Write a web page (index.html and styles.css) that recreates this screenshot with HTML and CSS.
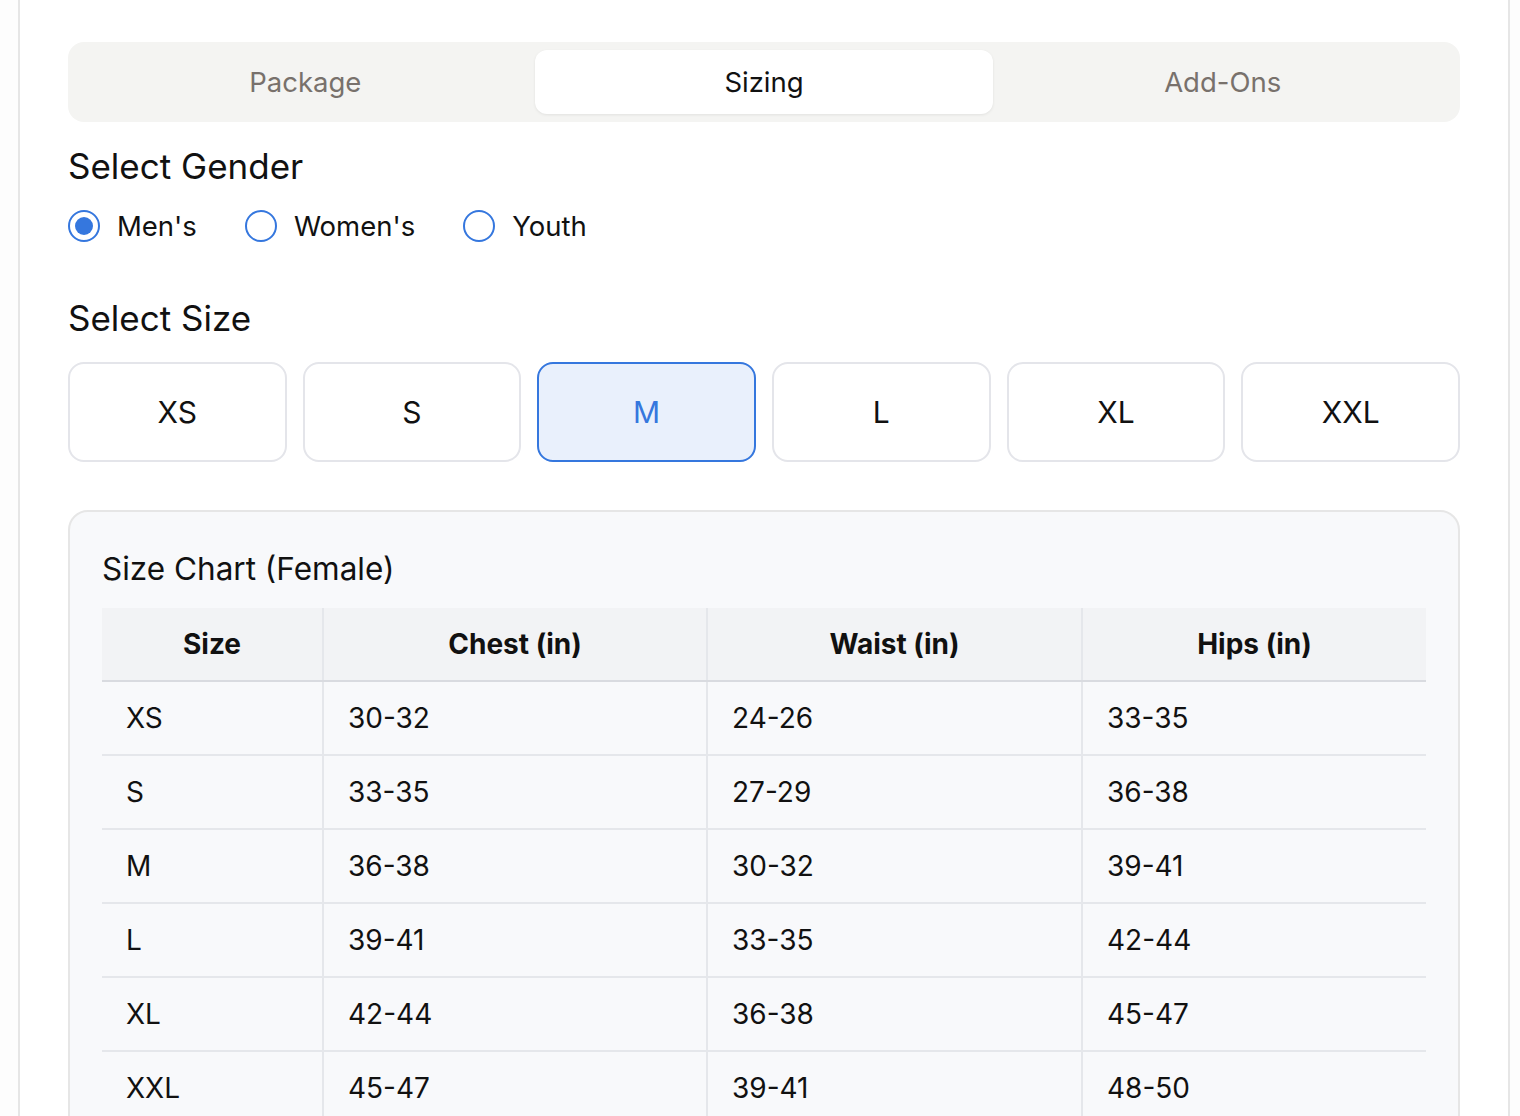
FILE: index.html
```html
<!DOCTYPE html>
<html lang="en">
<head>
<meta charset="utf-8">
<title>Sizing</title>
<link rel="stylesheet" href="styles.css">
</head>
<body>
<div class="page">
  <div class="card">
    <div class="tabs">
      <div class="tab">Package</div>
      <div class="tab active">Sizing</div>
      <div class="tab">Add-Ons</div>
    </div>

    <h2 class="heading gender-heading">Select Gender</h2>
    <div class="radios">
      <label class="radio-item"><span class="radio checked"></span><span class="radio-label">Men's</span></label>
      <label class="radio-item"><span class="radio"></span><span class="radio-label">Women's</span></label>
      <label class="radio-item"><span class="radio"></span><span class="radio-label">Youth</span></label>
    </div>

    <h2 class="heading size-heading">Select Size</h2>
    <div class="sizes">
      <div class="size-btn">XS</div>
      <div class="size-btn">S</div>
      <div class="size-btn selected">M</div>
      <div class="size-btn">L</div>
      <div class="size-btn">XL</div>
      <div class="size-btn">XXL</div>
    </div>

    <div class="chart">
      <h3 class="chart-title">Size Chart (Female)</h3>
      <table class="chart-table">
        <colgroup>
          <col class="c1"><col class="c2"><col class="c3"><col class="c4">
        </colgroup>
        <thead>
          <tr><th>Size</th><th>Chest (in)</th><th>Waist (in)</th><th>Hips (in)</th></tr>
        </thead>
        <tbody>
          <tr><td>XS</td><td>30-32</td><td>24-26</td><td>33-35</td></tr>
          <tr><td>S</td><td>33-35</td><td>27-29</td><td>36-38</td></tr>
          <tr><td>M</td><td>36-38</td><td>30-32</td><td>39-41</td></tr>
          <tr><td>L</td><td>39-41</td><td>33-35</td><td>42-44</td></tr>
          <tr><td>XL</td><td>42-44</td><td>36-38</td><td>45-47</td></tr>
          <tr><td>XXL</td><td>45-47</td><td>39-41</td><td>48-50</td></tr>
        </tbody>
      </table>
    </div>
  </div>
</div>
</body>
</html>
```

FILE: styles.css
```css
* { box-sizing: border-box; }
html, body {
  margin: 0;
  padding: 0;
  background: #fdfdfd;
  font-family: Inter, "Noto Sans", "Liberation Sans", sans-serif;
  color: #111;
}
.page {
  padding-left: 18px;
}
.card {
  width: 1492px;
  background: #fff;
  border-left: 2px solid #e6e6e6;
  border-right: 2px solid #e6e6e6;
  padding: 42px 48px 0 48px;
  min-height: 1200px;
}
.tabs {
  display: flex;
  height: 80px;
  padding: 8px;
  background: #f4f4f2;
  border-radius: 16px;
}
.tab {
  flex: 1;
  display: flex;
  align-items: center;
  justify-content: center;
  font-size: 27.5px;
  color: #78716c;
  border-radius: 12px;
}
.tab.active {
  background: #fff;
  color: #111;
  box-shadow: 0 1px 3px rgba(0,0,0,0.08);
}
.heading {
  margin: 0;
  font-size: 35px;
  font-weight: 400;
  line-height: 44px;
  color: #111;
}
.gender-heading { margin-top: 22px; }
.radios {
  display: flex;
  gap: 48px;
  margin-top: 22px;
  height: 32px;
}
.radio-item {
  display: flex;
  align-items: center;
  gap: 17px;
}
.radio {
  width: 32px;
  height: 32px;
  border-radius: 50%;
  border: 2px solid #3577de;
  display: flex;
  align-items: center;
  justify-content: center;
}
.radio.checked::after {
  content: "";
  width: 18px;
  height: 18px;
  border-radius: 50%;
  background: #3577de;
}
.radio-label {
  font-size: 27.5px;
  color: #111;
}
.size-heading { margin-top: 54px; }
.sizes {
  display: grid;
  grid-template-columns: repeat(6, 1fr);
  gap: 16px;
  margin-top: 22px;
}
.size-btn {
  height: 100px;
  border: 2px solid #e4e5ea;
  border-radius: 16px;
  display: flex;
  align-items: center;
  justify-content: center;
  font-size: 30px;
  color: #111;
  background: #fff;
}
.size-btn.selected {
  background: #e9f0fc;
  border-color: #3577de;
  color: #3577de;
}
.chart {
  margin-top: 48px;
  background: #f8f9fb;
  border: 2px solid #e6e6e6;
  border-radius: 20px;
  padding: 37px 32px 40px 32px;
}
.chart-title {
  margin: 0 0 19px 0;
  font-size: 31.5px;
  font-weight: 400;
  line-height: 40px;
  color: #111;
}
.chart-table {
  width: 1324px;
  border-collapse: collapse;
  table-layout: fixed;
  font-size: 28px;
}
.c1 { width: 221px; }
.c2 { width: 384px; }
.c3 { width: 375px; }
.c4 { width: 344px; }
.chart-table th {
  height: 73px;
  background: #f2f3f5;
  font-weight: 700;
  text-align: center;
  border-bottom: 2px solid #d9dbe0;
  border-left: 2px solid #e5e7eb;
  padding: 0 24px;
}
.chart-table td {
  height: 74px;
  text-align: left;
  padding: 0 24px;
  border-bottom: 2px solid #e5e7eb;
  border-left: 2px solid #e5e7eb;
  color: #111;
}
.chart-table th:first-child,
.chart-table td:first-child {
  border-left: none;
}
```
